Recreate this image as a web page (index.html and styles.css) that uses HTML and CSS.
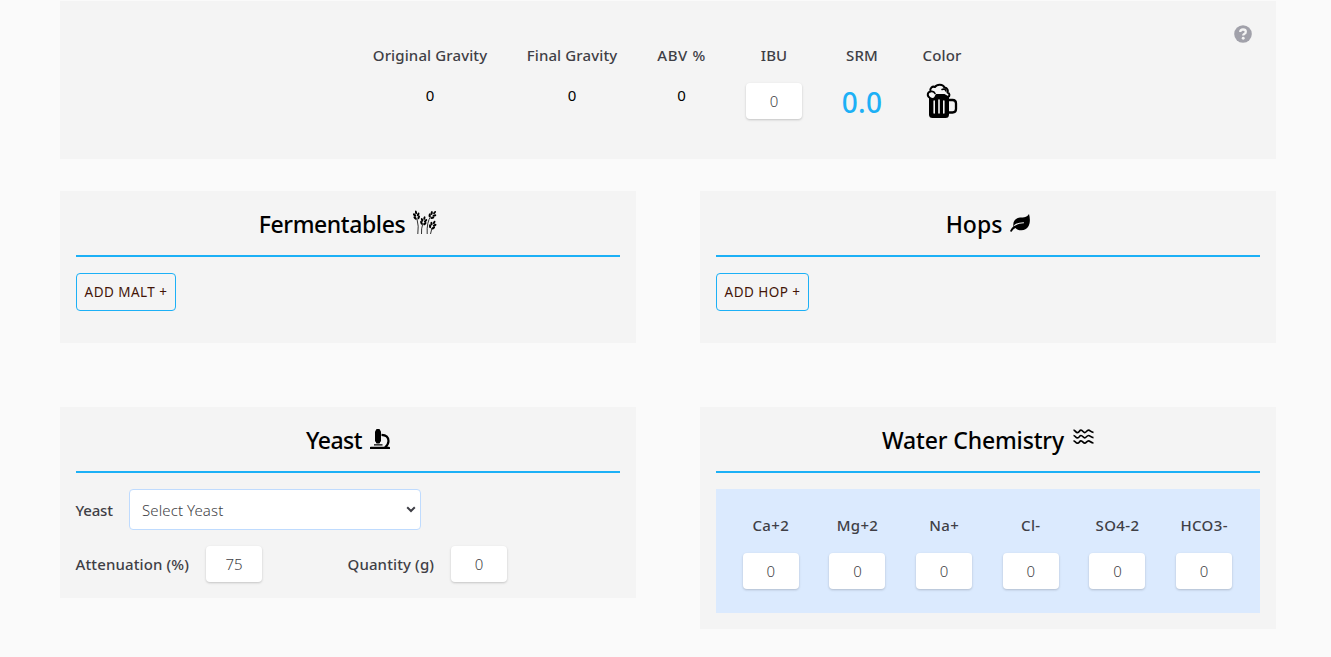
FILE: index.html
```html
<!DOCTYPE html>
<html lang="en">
<head>
<meta charset="utf-8">
<title>Recipe Builder</title>
<link rel="stylesheet" href="styles.css">
</head>
<body>
<main class="page">
  <section class="panel stats">
    <div class="stat stat-og"><span class="label">Original Gravity</span><span class="value">0</span></div>
    <div class="stat stat-fg"><span class="label">Final Gravity</span><span class="value">0</span></div>
    <div class="stat stat-abv"><span class="label">ABV %</span><span class="value">0</span></div>
    <div class="stat stat-ibu"><span class="label">IBU</span><input class="num" value="0" aria-label="IBU"></div>
    <div class="stat stat-srm"><span class="label">SRM</span><span class="srm">0.0</span></div>
    <div class="stat stat-color"><span class="label">Color</span>
      <svg class="beer" viewBox="0 0 32 36">
        <path d="M22 17h4.500q3.500 0 3.500 3.500v5.500q0 3.500-3.500 3.500h-4.500" fill="none" stroke="#000" stroke-width="2.300"/>
        <path d="M3 12h20v19.500q0 3.500-3.500 3.500h-13q-3.500 0-3.500-3.500z"/>
        <path d="M4 15C.5 13 1.500 9 4.500 8.500C3.500 5 6.500 2.800 9 4C11 .8 17 .8 18.500 4.500C21.500 5 22.500 7.500 21.500 9.500C24 10.500 24 13 22 14.200L18 12H10.500L9 15Q6.500 17 4 15z" fill="#f4f4f4" stroke="#000" stroke-width="2" stroke-linejoin="round"/>
        <path d="M5 8.500q3-.5 4 2M16 6.500q3-1.200 4 1.500M9 15q2.500-.5 2.500-3" fill="none" stroke="#000" stroke-width="1.600" stroke-linecap="round"/>
        <path d="M8.200 18v12M13 17v13M17.800 18v12" stroke="#f4f4f4" stroke-width="1.600" stroke-linecap="round"/>
      </svg>
    </div>
    <svg class="help" viewBox="0 0 18 18"><circle cx="9" cy="9" r="8.800" fill="#a1a1aa"/><path d="M6.200 7Q6.400 4.500 9 4.500Q11.800 4.500 11.800 6.800Q11.800 8.300 10.200 9Q9.200 9.500 9.200 10.500" fill="none" stroke="#f4f4f4" stroke-width="2.300"/><circle cx="9.200" cy="13.200" r="1.450" fill="#f4f4f4"/></svg>
  </section>

  <div class="columns">
    <section class="panel short">
      <h2 class="title"><span class="t-ferment">Fermentables</span>
        <svg class="icon wheat" viewBox="0 0 24 24">
          <defs><g id="ear"><ellipse cy="-4.600" rx="1" ry="1.900"/><ellipse cx="-1.800" cy="-2.300" rx="1.100" ry="2" transform="rotate(-32 -1.800 -2.300)"/><ellipse cx="1.800" cy="-2.300" rx="1.100" ry="2" transform="rotate(32 1.800 -2.300)"/><ellipse cx="-1.800" cy=".7" rx="1.100" ry="2" transform="rotate(-32 -1.800 .7)"/><ellipse cx="1.800" cy=".7" rx="1.100" ry="2" transform="rotate(32 1.800 .7)"/></g></defs>
          <use href="#ear" transform="translate(3.800 7) rotate(-10)"/>
          <use href="#ear" transform="translate(10.300 12.500) rotate(14)"/>
          <use href="#ear" transform="translate(18.500 6) rotate(42)"/>
          <use href="#ear" transform="translate(19 16.500) rotate(28)"/>
          <path d="M4 9Q6 16 4.800 24M10 13Q8 19 8.500 24M18 6Q13.500 12 14.200 24M19 18L17.500 24" fill="none" stroke="#000" stroke-width=".8"/>
        </svg>
      </h2>
      <button class="add add-malt">ADD MALT +</button>
    </section>
    <section class="panel short">
      <h2 class="title"><span class="t-hops">Hops</span>
        <svg class="icon leaf" viewBox="0 0 20 18"><path d="M19 0C21 7 20 16 11.500 16.300C8.500 16.500 6.500 15 5.500 14C3.500 14.800 2.800 16 1.800 17.500Q.8 18.200 0 17Q1.500 13.800 3.500 12.200C2.500 8 5 4 10 3.600C14 3.400 17 3.200 19 0z"/><path d="M4.600 11.400Q8 8.700 13.500 8.700" fill="none" stroke="#f4f4f4" stroke-width="1.100" stroke-linecap="round"/></svg>
      </h2>
      <button class="add add-hop">ADD HOP +</button>
    </section>

    <section class="panel">
      <h2 class="title"><span class="t-yeast">Yeast</span>
        <svg class="icon scope" viewBox="0 0 20 20"><rect x="5" y="1" width="6" height="12.500" rx="2"/><rect x="6" y="0" width="4" height="14.500" rx="1"/><path d="M11.500 5.800Q18.500 6 18.500 12Q18.500 15.500 15 18.500" fill="none" stroke="#000" stroke-width="2.200"/><path d="M4 15.300h8.500v1.300h-8.500zM0 18q.3-.2 1-.2h18q.8 0 1 .8v1.400h-20z"/></svg>
      </h2>
      <div class="row"><label class="label l-yeast">Yeast</label>
        <div class="select"><span>Select Yeast</span><svg class="chevron" viewBox="0 0 10 7"><path d="M1.200 1.200L5 5L8.800 1.200" fill="none" stroke="#3f3f46" stroke-width="2"/></svg></div>
      </div>
      <div class="row second"><label class="label l-att">Attenuation (%)</label><input class="num" value="75" aria-label="Attenuation"><label class="label l-qty">Quantity (g)</label><input class="num" value="0" aria-label="Quantity"></div>
    </section>
    <section class="panel">
      <h2 class="title"><span class="t-water">Water Chemistry</span>
        <svg class="icon waves" viewBox="0 0 20 16"><g fill="none" stroke="#000" stroke-width="1.700"><path id="wave" d="M0 1.200C2 1.200 2 3.600 4 3.600S5.800 1.200 7.500 1.200S9.800 3.600 11.200 3.600S13.300 1.200 15 1.200S17.500 3.400 20 3.400" /><use href="#wave" y="5.300"/><use href="#wave" y="10.600"/></g></svg>
      </h2>
      <div class="ions">
        <div class="ion"><span class="label">Ca+2</span><input class="num" value="0" aria-label="Calcium"></div>
        <div class="ion"><span class="label">Mg+2</span><input class="num" value="0" aria-label="Magnesium"></div>
        <div class="ion"><span class="label">Na+</span><input class="num" value="0" aria-label="Sodium"></div>
        <div class="ion"><span class="label">Cl-</span><input class="num" value="0" aria-label="Chloride"></div>
        <div class="ion"><span class="label">SO4-2</span><input class="num" value="0" aria-label="Sulfate"></div>
        <div class="ion"><span class="label">HCO3-</span><input class="num" value="0" aria-label="Bicarbonate"></div>
      </div>
    </section>
  </div>
</main>
</body>
</html>
```
FILE: styles.css
```css
* { box-sizing: border-box; }
body { margin: 0; background: #fafafa; color: #000; font: 15px/24px "Noto Sans", "Open Sans", sans-serif; }
.page { width: 1216px; margin-left: 60px; padding-top: 1px; }
.panel { background: #f4f4f4; padding: 16px; }
.stats { position: relative; height: 158px; padding: 42px 1px 0 0; display: flex; justify-content: center; gap: 40px; }
.stat { display: flex; flex-direction: column; align-items: center; white-space: nowrap; }
.stat-og { width: 114px; }
.stat-fg { width: 90px; }
.stat-abv { width: 49px; }
.stat-ibu { width: 56px; }
.stat-srm, .stat-color { width: 40px; }
.label { color: #3f3f46; font-weight: 500; letter-spacing: .12px; white-space: nowrap; }
.stat-abv .label { letter-spacing: .6px; }
.value { margin-top: 16px; }
.num { width: 56px; height: 36px; border: 0; border-radius: 4px; padding: 0; background: #fff; color: #3f3f46; font: 350 15px/24px "Noto Sans", "Open Sans", sans-serif; text-align: center; box-shadow: 0 1px 3px rgba(0,0,0,.1), 0 1px 2px rgba(0,0,0,.1); }
.stat .num { margin-top: 16px; }
.srm { margin-top: 17px; color: #1cb0f6; font-weight: 550; font-size: 28px; line-height: 36px; letter-spacing: .3px; }
.beer { width: 32px; height: 36px; margin-top: 16px; }
.help { position: absolute; width: 18px; height: 18px; top: 24px; right: 24px; }
.columns { margin-top: 32px; display: grid; grid-template-columns: 576px 576px; column-gap: 64px; row-gap: 64px; align-items: start; }
.short { height: 152px; }
.title { margin: 0 0 16px; height: 50px; border-bottom: 2px solid #1cb0f6; display: flex; justify-content: center; align-items: flex-start; gap: 8px; font-size: 23px; line-height: 34px; font-weight: 500; white-space: nowrap; }
.t-ferment { letter-spacing: -.4px; }
.t-yeast { letter-spacing: -.5px; }
.t-water { letter-spacing: -.15px; }
.wheat { width: 24px; height: 24px; margin-top: 3px; }
.leaf { width: 20px; height: 18px; margin-top: 7px; }
.scope { width: 20px; height: 20px; margin-top: 6px; }
.waves { width: 21px; height: 16px; margin: 6px 0 0 1px; }
.add { display: block; height: 38px; padding: 0; border: 1px solid #1cb0f6; border-radius: 4px; background: transparent; color: #431407; font: 450 13.5px/20px "Noto Sans", "Open Sans", sans-serif; letter-spacing: .45px; }
.add-malt { width: 100px; }
.add-hop { width: 93px; }
.row { display: flex; align-items: center; }
.second { margin-top: 16px; }
.l-yeast { width: 53px; letter-spacing: -.2px; }
.l-att { width: 130px; }
.l-qty { width: 103px; margin-left: 86px; }
.row .label { position: relative; left: -.5px; }
.select { width: 292px; height: 41px; border: 1px solid #bfdbfe; border-radius: 4px; background: #fff; color: #3f3f46; padding: 0 4px 0 12px; display: flex; align-items: center; justify-content: space-between; font-weight: 350; letter-spacing: .1px; }
.chevron { width: 10px; height: 7px; }
.ions { height: 124px; padding: 24px 12.500px 0 11.500px; background: #dbeafe; display: grid; grid-template-columns: repeat(6, 1fr); }
.ion { display: flex; flex-direction: column; align-items: center; gap: 16px; }
.ion .label { letter-spacing: .35px; }
```
